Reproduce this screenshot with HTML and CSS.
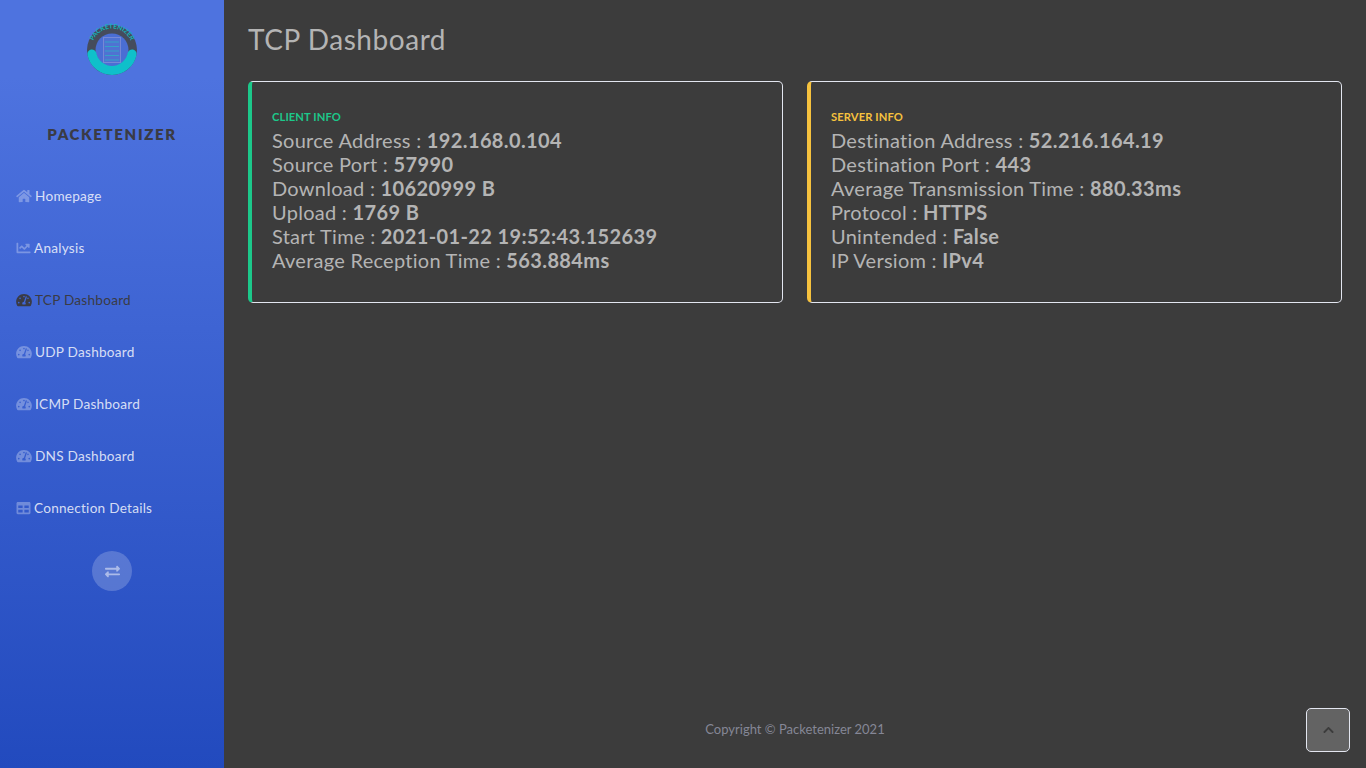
FILE: index.html
```html
<!DOCTYPE html>
<html lang="en">
<head>
    <meta charset="UTF-8">
    <meta name="viewport" content="width=device-width, initial-scale=1.0">
    <title>TCP Dashboard - Packetenizer</title>
    <link rel="stylesheet" href="styles.css">
</head>
<body>
    <svg class="icon-defs" aria-hidden="true">
        <symbol id="i-home" viewBox="0 0 576 512"><path d="M280.37 148.26L96 300.11V464a16 16 0 0 0 16 16l112.06-.29a16 16 0 0 0 15.92-16V368a16 16 0 0 1 16-16h64a16 16 0 0 1 16 16v95.64a16 16 0 0 0 16 16.05L464 480a16 16 0 0 0 16-16V300L295.67 148.26a12.19 12.19 0 0 0-15.3 0zM571.6 251.47L488 182.56V44.05a12 12 0 0 0-12-12h-56a12 12 0 0 0-12 12v72.61L318.47 43a48 48 0 0 0-61 0L4.34 251.47a12 12 0 0 0-1.6 16.9l25.5 31A12 12 0 0 0 45.15 301l235.22-193.74a12.19 12.19 0 0 1 15.3 0L530.9 301a12 12 0 0 0 16.9-1.6l25.5-31a12 12 0 0 0-1.7-16.93z"/></symbol>
        <symbol id="i-chart" viewBox="0 0 512 512"><path d="M496 384H64V80c0-8.84-7.16-16-16-16H16C7.16 64 0 71.16 0 80v336c0 17.67 14.33 32 32 32h464c8.84 0 16-7.16 16-16v-32c0-8.84-7.16-16-16-16zM464 96H345.94c-21.38 0-32.09 25.85-16.97 40.97l32.4 32.4L288 242.75l-73.37-73.37c-12.5-12.5-32.76-12.5-45.25 0l-68.69 68.69c-6.25 6.25-6.25 16.38 0 22.63l22.62 22.62c6.25 6.25 16.38 6.25 22.63 0L192 237.25l73.37 73.37c12.5 12.5 32.76 12.5 45.25 0l96-96 32.4 32.4c15.12 15.12 40.97 4.41 40.97-16.97V112c.01-8.84-7.15-16-15.99-16z"/></symbol>
        <symbol id="i-gauge" viewBox="0 0 576 512"><path d="M288 32C128.94 32 0 160.94 0 320c0 52.8 14.25 102.26 39.06 144.8 5.61 9.62 16.3 15.2 27.44 15.2h443c11.14 0 21.83-5.58 27.44-15.2C561.75 422.26 576 372.8 576 320c0-159.06-128.94-288-288-288zm0 64c14.71 0 26.58 10.13 30.32 23.65-1.11 2.26-2.64 4.23-3.45 6.67l-9.22 27.67c-5.13 3.49-10.97 6.01-17.64 6.01-17.67 0-32-14.33-32-32S270.33 96 288 96zM96 384c-17.67 0-32-14.33-32-32s14.33-32 32-32 32 14.33 32 32-14.33 32-32 32zm48-160c-17.67 0-32-14.33-32-32s14.33-32 32-32 32 14.33 32 32-14.33 32-32 32zm246.77-72.41l-61.33 184C343.13 347.33 352 364.54 352 384c0 11.72-3.38 22.55-8.88 32H232.88c-5.5-9.45-8.88-20.28-8.88-32 0-33.94 26.5-61.43 59.9-63.59l61.34-184.01c4.17-12.56 17.73-19.45 30.36-15.17 12.57 4.19 19.35 17.79 15.17 30.36zm14.66 57.2l15.52-46.55c3.47-1.29 7.13-2.23 11.05-2.23 17.67 0 32 14.33 32 32s-14.33 32-32 32c-11.38 0-20.89-6.28-26.57-15.22zM480 384c-17.67 0-32-14.33-32-32s14.33-32 32-32 32 14.33 32 32-14.33 32-32 32z"/></symbol>
        <symbol id="i-table" viewBox="0 0 512 512"><path d="M464 32H48C21.49 32 0 53.49 0 80v352c0 26.51 21.49 48 48 48h416c26.51 0 48-21.49 48-48V80c0-26.51-21.49-48-48-48zM224 416H64v-96h160v96zm0-160H64v-96h160v96zm224 160H288v-96h160v96zm0-160H288v-96h160v96z"/></symbol>
    </svg>

    <div class="wrapper">
        <nav class="sidebar">
            <a class="brand" href="#">
                <svg class="brand-logo" viewBox="0 0 50 50" role="img" aria-label="Packetenizer logo">
                    <circle class="logo-ring" cx="25" cy="25" r="25"/>
                    <circle class="logo-inner" cx="25" cy="25" r="16.5"/>
                    <path class="logo-arc" d="M4.9 29a20.5 20.5 0 0 0 40.2 0"/>
                    <rect class="logo-rack" x="16.5" y="12.5" width="17" height="25"/>
                    <path class="logo-lines" d="M18 17h14M18 21.5h14M18 26h14M18 30.5h14M18 35h14"/>
                    <path id="logoCurve" class="logo-curve" d="M4.5 24a20.5 20.5 0 0 1 41 0"/>
                    <text class="logo-text"><textPath href="#logoCurve" startOffset="50%" text-anchor="middle">PACKETENIZER</textPath></text>
                </svg>
                <span class="brand-name">PACKETENIZER</span>
            </a>
            <ul class="nav-list">
                <li><a class="nav-link" href="#"><svg class="nav-icon"><use href="#i-home"/></svg>Homepage</a></li>
                <li><a class="nav-link" href="#"><svg class="nav-icon narrow"><use href="#i-chart"/></svg>Analysis</a></li>
                <li><a class="nav-link active" href="#"><svg class="nav-icon"><use href="#i-gauge"/></svg>TCP Dashboard</a></li>
                <li><a class="nav-link" href="#"><svg class="nav-icon"><use href="#i-gauge"/></svg>UDP Dashboard</a></li>
                <li><a class="nav-link" href="#"><svg class="nav-icon"><use href="#i-gauge"/></svg>ICMP Dashboard</a></li>
                <li><a class="nav-link" href="#"><svg class="nav-icon"><use href="#i-gauge"/></svg>DNS Dashboard</a></li>
                <li><a class="nav-link" href="#"><svg class="nav-icon narrow"><use href="#i-table"/></svg>Connection Details</a></li>
            </ul>
            <button class="sidebar-toggle" aria-label="Toggle sidebar">
                <svg viewBox="0 0 512 512"><path d="M0 168v-16c0-13.255 10.745-24 24-24h360V80c0-21.367 25.899-32.042 40.971-16.971l80 80c9.372 9.373 9.372 24.569 0 33.941l-80 80C409.956 271.982 384 261.456 384 240v-48H24c-13.255 0-24-10.745-24-24zm488 152H128v-48c0-21.314-25.862-32.08-40.971-16.971l-80 80c-9.372 9.373-9.372 24.569 0 33.941l80 80C102.057 463.997 128 453.437 128 432v-48h360c13.255 0 24-10.745 24-24v-16c0-13.255-10.745-24-24-24z"/></svg>
            </button>
        </nav>

        <div class="content">
            <main class="page">
                <h1 class="page-title">TCP Dashboard</h1>
                <div class="card-row">
                    <section class="card card-client">
                        <h2 class="card-title">Client Info</h2>
                        <p>Source Address : <b>192.168.0.104</b></p>
                        <p>Source Port : <b>57990</b></p>
                        <p>Download : <b>10620999 B</b></p>
                        <p>Upload : <b>1769 B</b></p>
                        <p>Start Time : <b>2021-01-22 19:52:43.152639</b></p>
                        <p>Average Reception Time : <b>563.884ms</b></p>
                    </section>
                    <section class="card card-server">
                        <h2 class="card-title">Server Info</h2>
                        <p>Destination Address : <b>52.216.164.19</b></p>
                        <p>Destination Port : <b>443</b></p>
                        <p>Average Transmission Time : <b>880.33ms</b></p>
                        <p>Protocol : <b>HTTPS</b></p>
                        <p>Unintended : <b>False</b></p>
                        <p>IP Versiom : <b>IPv4</b></p>
                    </section>
                </div>
            </main>
            <footer class="footer">Copyright &copy; Packetenizer 2021</footer>
        </div>
    </div>

    <a class="scroll-top" href="#" aria-label="Scroll to top">
        <svg viewBox="0 0 448 512"><path d="M240.971 130.524l194.343 194.343c9.373 9.373 9.373 24.569 0 33.941l-22.667 22.667c-9.357 9.357-24.522 9.375-33.901.04L224 227.495 69.255 381.516c-9.379 9.335-24.544 9.317-33.901-.04l-22.667-22.667c-9.373-9.373-9.373-24.569 0-33.941L207.03 130.525c9.372-9.373 24.568-9.373 33.941-.001z"/></svg>
    </a>
</body>
</html>
```

FILE: styles.css
```css
* {
    box-sizing: border-box;
}

body {
    margin: 0;
    font-family: "Lato", "Open Sans", sans-serif;
    background-color: #3c3c3c;
    color: #b4b4b4;
}

a {
    text-decoration: none;
}

.icon-defs {
    display: none;
}

.wrapper {
    display: flex;
    height: 768px;
    overflow: hidden;
}

/* sidebar */
.sidebar {
    width: 224px;
    flex-shrink: 0;
    display: flex;
    flex-direction: column;
    align-items: center;
    background-image: linear-gradient(180deg, #4e73df 10%, #224abe 100%);
}

.brand {
    display: flex;
    flex-direction: column;
    align-items: center;
    padding-top: 25px;
    height: 170px;
}

.brand-logo {
    width: 50px;
    height: 50px;
    overflow: visible;
}

.logo-ring {
    fill: #454c5c;
}

.logo-inner {
    fill: #4a6ed4;
}

.logo-arc {
    fill: none;
    stroke: #0fc0ca;
    stroke-width: 9;
    stroke-linecap: round;
}

.logo-rack {
    fill: #4f72d2;
    stroke: #7688d6;
    stroke-width: 1;
}

.logo-lines {
    stroke: #35a2c8;
    stroke-width: 1;
}

.logo-curve {
    fill: none;
}

.logo-text {
    font-size: 6.5px;
    font-weight: 700;
    fill: #14b3b8;
}

.brand-name {
    margin-top: 50px;
    font-size: 15px;
    font-weight: 800;
    letter-spacing: 1.65px;
    color: #3a3b45;
}

.nav-list {
    list-style: none;
    margin: 0;
    padding: 0;
    width: 100%;
}

.nav-link {
    display: flex;
    align-items: center;
    height: 52px;
    padding-left: 16px;
    font-size: 13.6px;
    letter-spacing: 0.25px;
    color: rgba(255, 255, 255, 0.8);
}

.nav-icon {
    width: 16px;
    height: 14px;
    margin-right: 3px;
    fill: rgba(255, 255, 255, 0.3);
}

.nav-icon.narrow {
    width: 15px;
}

.nav-link.active {
    color: #3a3b45;
}

.nav-link.active .nav-icon {
    fill: #3a3b45;
}

.sidebar-toggle {
    display: flex;
    align-items: center;
    justify-content: center;
    width: 40px;
    height: 40px;
    margin-top: 17px;
    padding: 0;
    border: 0;
    border-radius: 50%;
    background-color: rgba(255, 255, 255, 0.2);
}

.sidebar-toggle svg {
    width: 15px;
    height: 15px;
    fill: rgba(255, 255, 255, 0.5);
}

/* main content */
.content {
    flex: 1;
    display: flex;
    flex-direction: column;
}

.page {
    flex: 1;
    padding: 0 24px;
}

.page-title {
    margin: 0;
    padding-top: 23px;
    height: 81px;
    font-size: 28px;
    font-weight: 400;
    line-height: 33.6px;
    letter-spacing: 0.55px;
}

.card-row {
    display: grid;
    grid-template-columns: 1fr 1fr;
    gap: 24px;
}

.card {
    height: 222px;
    padding: 28px 20px 0;
    border: 1px solid #e3e6f0;
    border-left-width: 4px;
    border-radius: 5px;
    font-size: 20px;
    line-height: 24px;
    letter-spacing: 0.27px;
}

.card p {
    margin: 0;
}

.card b {
    font-weight: 700;
    letter-spacing: 0.38px;
}

.card-title {
    margin: 0 0 5px;
    font-size: 11.2px;
    font-weight: 700;
    line-height: 13.4px;
    letter-spacing: 0.1px;
    text-transform: uppercase;
}

.card-client {
    border-left-color: #1cc88a;
}

.card-client .card-title {
    color: #1cc88a;
}

.card-server {
    border-left-color: #f6c23e;
}

.card-server .card-title {
    color: #f6c23e;
}

.footer {
    height: 78px;
    padding-top: 31px;
    text-align: center;
    font-size: 13px;
    color: #858796;
}

.scroll-top {
    position: fixed;
    right: 16px;
    bottom: 16px;
    display: flex;
    align-items: center;
    justify-content: center;
    width: 44px;
    height: 44px;
    border: 1px solid #e3e6f0;
    border-radius: 5px;
    background-color: #636363;
}

.scroll-top svg {
    width: 11px;
    height: 12px;
    fill: #3c3c3c;
}
```
